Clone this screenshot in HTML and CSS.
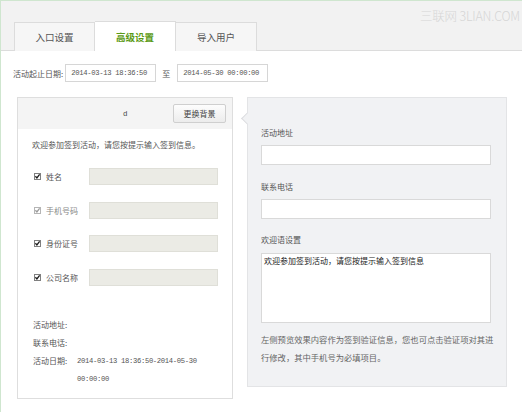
FILE: index.html
```html
<!DOCTYPE html>
<html lang="zh">
<head>
<meta charset="utf-8">
<link rel="stylesheet" href="styles.css">
</head>
<body>
<div class="frame">
  <div class="tabbar">
    <div class="tab">入口设置</div>
    <div class="tab active">高级设置</div>
    <div class="tab">导入用户</div>
    <div class="watermark">三联网 3LIAN.COM</div>
  </div>
  <div class="daterow">
    <span class="lbl">活动起止日期:</span>
    <span class="dinput mono">2014-03-13 18:36:50</span>
    <span class="to">至</span>
    <span class="dinput mono">2014-05-30 00:00:00</span>
  </div>
  <div class="content">
    <div class="preview">
      <div class="phead">
        <span></span>
        <span class="ptitle mono">d</span>
        <span class="btn">更换背景</span>
      </div>
      <div class="pbody">
        <p class="welcome">欢迎参加签到活动，请您按提示输入签到信息。</p>
        <div class="fields">
          <div class="frow">
            <svg class="cb" width="7" height="7" viewBox="0 0 7 7"><rect x=".5" y=".5" width="6" height="6" fill="#fff" stroke="#7f7f7f"/><path d="M1.4 3.3 L2.9 4.9 L5.6 1.4" stroke="#1a1a1a" stroke-width="1.3" fill="none"/></svg>
            <span class="flabel">姓名</span>
            <span class="fbox"></span>
          </div>
          <div class="frow">
            <svg class="cb" width="7" height="7" viewBox="0 0 7 7"><rect x=".5" y=".5" width="6" height="6" fill="#fff" stroke="#b5b5b5"/><path d="M1.4 3.3 L2.9 4.9 L5.6 1.4" stroke="#9a9a9a" stroke-width="1.3" fill="none"/></svg>
            <span class="flabel dim">手机号码</span>
            <span class="fbox"></span>
          </div>
          <div class="frow">
            <svg class="cb" width="7" height="7" viewBox="0 0 7 7"><rect x=".5" y=".5" width="6" height="6" fill="#fff" stroke="#7f7f7f"/><path d="M1.4 3.3 L2.9 4.9 L5.6 1.4" stroke="#1a1a1a" stroke-width="1.3" fill="none"/></svg>
            <span class="flabel">身份证号</span>
            <span class="fbox"></span>
          </div>
          <div class="frow">
            <svg class="cb" width="7" height="7" viewBox="0 0 7 7"><rect x=".5" y=".5" width="6" height="6" fill="#fff" stroke="#7f7f7f"/><path d="M1.4 3.3 L2.9 4.9 L5.6 1.4" stroke="#1a1a1a" stroke-width="1.3" fill="none"/></svg>
            <span class="flabel">公司名称</span>
            <span class="fbox"></span>
          </div>
        </div>
        <div class="info">
          <div class="irow"><span class="ilabel">活动地址:</span></div>
          <div class="irow"><span class="ilabel">联系电话:</span></div>
          <div class="irow"><span class="ilabel">活动日期:</span><span class="ival mono">2014-03-13 18:36:50-2014-05-30 00:00:00</span></div>
        </div>
      </div>
    </div>
    <div class="settings">
      <div class="slabel">活动地址</div>
      <div class="sinput"></div>
      <div class="slabel">联系电话</div>
      <div class="sinput"></div>
      <div class="slabel">欢迎语设置</div>
      <div class="sarea">欢迎参加签到活动，请您按提示输入签到信息</div>
      <p class="note">左侧预览效果内容作为签到验证信息，您也可点击验证项对其进行修改，其中手机号为必填项目。</p>
    </div>
  </div>
</div>
</body>
</html>
```
FILE: styles.css
```css
* { box-sizing: border-box; }
html, body { margin: 0; padding: 0; }
body {
  width: 522px;
  height: 412px;
  overflow: hidden;
  background: #fff;
  font-family: "Noto Sans CJK SC", "Noto Sans", sans-serif;
  font-size: 8px;
  color: #555;
}
.frame {
  height: 412px;
  border-left: 1px solid #cfe6cf;
  border-top: 1px solid #cfe6cf;
}
.mono {
  font-family: "Liberation Mono", monospace;
  font-size: 7.2px;
  letter-spacing: -0.32px;
}
.tabbar {
  position: relative;
  height: 50px;
  background: #f2f2f2;
  border-bottom: 1px solid #dcdcdc;
  display: flex;
  align-items: flex-end;
  padding-left: 13px;
}
.tab {
  width: 81px;
  height: 29px;
  margin-bottom: -1px;
  border: 1px solid #dcdcdc;
  border-bottom: none;
  background: #f6f6f6;
  display: flex;
  align-items: center;
  justify-content: center;
  font-size: 9.5px;
  color: #555;
}
.tab + .tab { border-left: none; }
.tab.active {
  background: #fff;
  height: 30px;
  color: #5b9a15;
  font-weight: 700;
}
.watermark {
  position: absolute;
  right: 2px;
  top: 5px;
  font-size: 12.5px;
  font-weight: 300;
  color: #d6d6d6;
  letter-spacing: -0.2px;
}
.daterow {
  display: flex;
  align-items: center;
  padding-left: 12px;
  margin-top: 13px;
  height: 18px;
}
.lbl { margin-right: 2px; color: #555; }
.dinput {
  width: 91px;
  height: 18px;
  border: 1px solid #d6d6d6;
  display: flex;
  align-items: center;
  padding-left: 5px;
  color: #555;
}
.to { margin: 0 7px 0 6px; color: #555; }
.content {
  display: flex;
  align-items: flex-start;
  gap: 14px;
  padding-left: 16px;
  margin-top: 15px;
}
.preview {
  width: 216px;
  border: 1px solid #dedede;
  background: #fff;
}
.phead {
  height: 31px;
  background: #f4f4f4;
  display: grid;
  grid-template-columns: 1fr auto 1fr;
  align-items: center;
  padding: 0 6px;
}
.ptitle { color: #444; font-size: 7.5px; }
.btn {
  justify-self: end;
  width: 53px;
  height: 19px;
  border: 1px solid #cfcfcf;
  border-radius: 2px;
  background: linear-gradient(#fdfdfd, #ececec);
  display: flex;
  align-items: center;
  justify-content: center;
  color: #444;
}
.pbody {
  padding: 10px 13px 10px 14px;
}
.welcome {
  margin: 0;
  line-height: 12px;
  color: #555;
}
.fields {
  margin-top: 17px;
  display: flex;
  flex-direction: column;
  gap: 16.6px;
}
.frow {
  display: flex;
  align-items: center;
  height: 17px;
}
.cb { margin-left: 2px; flex: none; }
.flabel { margin-left: 5px; width: 43px; color: #555; }
.flabel.dim { color: #888; }
.fbox {
  width: 129px;
  height: 17px;
  background: #ebebe5;
  border: 1px solid #dfdfd8;
}
.info {
  margin-top: 30px;
  padding-left: 1px;
}
.irow {
  display: flex;
  line-height: 18px;
  color: #555;
}
.ilabel { flex: none; width: 44px; }
.ival { color: #555; line-height: 18px; }
.settings {
  position: relative;
  width: 260px;
  height: 290px;
  background: #f1f2f4;
  border: 1px solid #e3e4e6;
  padding: 29px 15px 0 13px;
}
.settings::before {
  content: "";
  position: absolute;
  left: -5px;
  top: 16px;
  width: 8px;
  height: 8px;
  background: #f1f2f4;
  border-left: 1px solid #dcdde0;
  border-bottom: 1px solid #dcdde0;
  transform: rotate(45deg);
}
.slabel {
  line-height: 12px;
  color: #555;
}
.sinput {
  margin: 6px 0 16px;
  height: 20px;
  background: #fff;
  border: 1px solid #d9d9d9;
}
.settings .sinput:nth-of-type(4) { margin-bottom: 15px; }
.sarea {
  margin-top: 7px;
  height: 70px;
  background: #fff;
  border: 1px solid #d9d9d9;
  padding: 1px 2px;
  color: #1a1a1a;
  line-height: 12px;
}
.note {
  margin: 7px -3px 0 0;
  font-size: 8.3px;
  line-height: 18px;
  color: #666;
}
```
